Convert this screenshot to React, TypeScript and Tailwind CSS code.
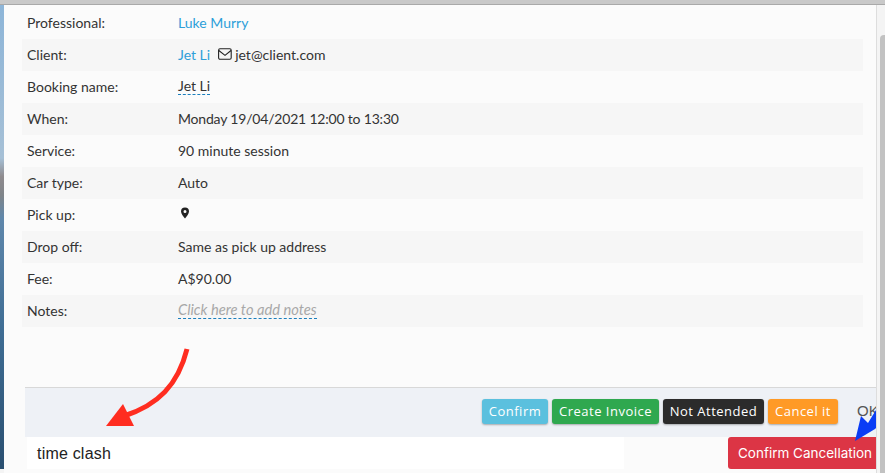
const rows: { label: string; value: React.ReactNode }[] = [
  { label: "Professional:", value: <span className="text-[#2d9fd9]">Luke Murry</span> },
  {
    label: "Client:",
    value: (
      <span className="flex items-center">
        <span className="text-[#2d9fd9]">Jet Li</span>
        <svg className="ml-[8px] mr-[3px]" width="14" height="12" viewBox="0 0 14 12" fill="none" stroke="#222" strokeWidth="1.1">
          <rect x="0.6" y="0.8" width="12.6" height="10.4" rx="1.4" />
          <path d="M0.8 2.5 L7 7.4 L13 2.5" />
        </svg>
        <span>jet@client.com</span>
      </span>
    ),
  },
  {
    label: "Booking name:",
    value: <span className="inline-block border-b border-dashed border-[#1b7fbd] leading-[17px]">Jet Li</span>,
  },
  { label: "When:", value: <span className="tracking-[-0.19px]">Monday 19/04/2021 12:00 to 13:30</span> },
  { label: "Service:", value: "90 minute session" },
  { label: "Car type:", value: "Auto" },
  {
    label: "Pick up:",
    value: (
      <svg className="mb-[2px] ml-[2px]" width="10" height="12" viewBox="0 0 10 12">
        <path
          fillRule="evenodd"
          fill="#222"
          d="M5 0.5a4 4 0 0 1 4 4c0 2.4-2.6 5-4 7c-1.4-2-4-4.600-4-7a4 4 0 0 1 4-4z M5 3a1.500 1.500 0 1 0 0 3a1.500 1.500 0 0 0 0-3z"
        />
      </svg>
    ),
  },
  { label: "Drop off:", value: "Same as pick up address" },
  { label: "Fee:", value: "A$90.00" },
  {
    label: "Notes:",
    value: (
      <span className="inline-block border-b border-dashed border-[#1b7fbd] text-[14.7px] italic leading-[17px] text-[#a8a8a8]">
        Click here to add notes
      </span>
    ),
  },
];

const actions = [
  { label: "Confirm", className: "bg-[#5bc0de] w-[66px]" },
  { label: "Create Invoice", className: "bg-[#2fa84f] w-[107px]" },
  { label: "Not Attended", className: "bg-[#2b2b2b] w-[101px]" },
  { label: "Cancel it", className: "bg-[#ff9a26] w-[70px]" },
];

export default function App() {
  return (
    <div className="relative h-[473px] w-[885px] overflow-hidden bg-[#f4f4f4] font-['Lato','Liberation_Sans',sans-serif]">
      <div className="h-[5px] border-b border-[#a9a9a9] bg-[#c9c9c9]" />
      <div className="flex h-[468px]">
        <div className="h-[464px] w-[4px] bg-[linear-gradient(to_bottom,#8db5d8_0%,#a6c0d6_33%,#8f8b8e_37%,#7f8489_41%,#5f87ab_46%,#3f6d94_70%,#2a4f70_100%)]" />
        <div className="flex h-full w-[873px] flex-col border-r border-[#dddddd] bg-[#fbfbfb] pl-[21px]">
          <div className="-ml-[3px] w-[841px] pt-[2px]">
            {rows.map((row, i) => (
              <div
                key={row.label}
                className={`flex h-[32px] items-center pb-[2px] pl-[5px] text-[14px] text-[#333] ${i % 2 === 1 ? "bg-[#f6f6f6]" : ""}`}
              >
                <div className="w-[151px]">{row.label}</div>
                <div className="flex items-center">{row.value}</div>
              </div>
            ))}
          </div>
          <div className="mt-[60px] flex h-[50px] items-center justify-end border-t border-[#d8d8d8] bg-[#eef1f6] pb-[2px]">
            {actions.map((a) => (
              <button
                key={a.label}
                className={`mr-[4px] h-[25px] rounded-[3px] font-['Open_Sans','Liberation_Sans',sans-serif] text-[13px] tracking-[0.5px] text-white shadow-[0_1px_2px_rgba(0,0,0,0.3)] ${a.className}`}
              >
                {a.label}
              </button>
            ))}
            <span className="ml-[15px] w-[19px] overflow-hidden font-['Liberation_Sans',sans-serif] text-[15px] text-[#555]">OK</span>
          </div>
          <div className="flex flex-1 items-start">
            <div className="ml-[2px] h-[32px] w-[597px] bg-white pl-[10px] font-['Liberation_Sans',sans-serif] text-[16px] leading-[33px] tracking-[0.2px] text-[#222]">
              time clash
            </div>
            <button className="ml-auto h-[32px] w-[148px] rounded-l-[3px] bg-[#dc3545] pl-[10px] text-left font-['Inter','Liberation_Sans',sans-serif] text-[13.5px] text-white">
              Confirm Cancellation
            </button>
          </div>
        </div>
        <div className="min-w-0 flex-1 bg-[#f4f4f4] pl-[3px] pt-[30px]">
          <div className="h-full w-[5px] rounded-tl-[4px] bg-[#c2c2c2]" />
        </div>
      </div>
      {/* annotation arrows */}
      <svg className="pointer-events-none absolute left-0 top-0" width="885" height="473" viewBox="0 0 885 473">
        <path d="M187 349 C178 385 158 405 124 416" fill="none" stroke="#ff2d20" strokeWidth="5" />
        <polygon points="106,426 123,404 134,426" fill="#ff2d20" />
        <polygon points="855,441 861,416 868,423 876,410 876,428 875,429" fill="#0a3cf5" />
      </svg>
    </div>
  );
}
